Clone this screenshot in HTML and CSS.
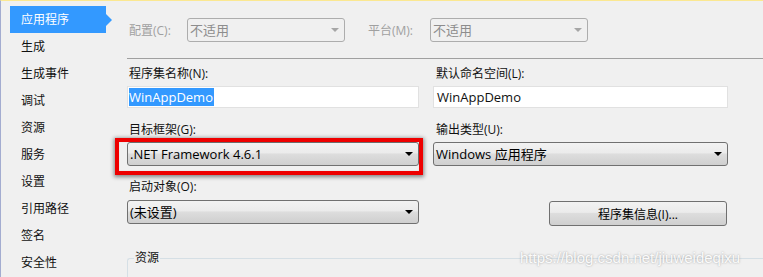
FILE: index.html
```html
<!DOCTYPE html>
<html lang="zh-CN">
<head>
<meta charset="utf-8">
<title>项目属性</title>
<link rel="stylesheet" href="styles.css">
</head>
<body>
<div class="window">
  <nav class="sidebar">
    <div class="nav-item active">应用程序</div>
    <div class="nav-item">生成</div>
    <div class="nav-item">生成事件</div>
    <div class="nav-item">调试</div>
    <div class="nav-item">资源</div>
    <div class="nav-item">服务</div>
    <div class="nav-item">设置</div>
    <div class="nav-item">引用路径</div>
    <div class="nav-item">签名</div>
    <div class="nav-item">安全性</div>
  </nav>
  <main class="content">
    <div class="toprow">
      <span class="top-label cfg">配置(C):</span>
      <div class="combo disabled w158"><span class="combo-text">不适用</span><span class="arrow"></span></div>
      <span class="top-label plat">平台(M):</span>
      <div class="combo disabled w158"><span class="combo-text">不适用</span><span class="arrow"></span></div>
    </div>
    <div class="sep"></div>
    <div class="grid">
      <div class="field left r1">
        <div class="lbl">程序集名称(N):</div>
        <div class="textbox"><span class="sel">WinAppDemo</span></div>
      </div>
      <div class="field right r1">
        <div class="lbl">默认命名空间(L):</div>
        <div class="textbox"><span class="plain">WinAppDemo</span></div>
      </div>
      <div class="field left r2">
        <div class="lbl">目标框架(G):</div>
        <div class="combo-wrap">
          <div class="combo"><span class="combo-text">.NET Framework 4.6.1</span><span class="arrow"></span></div>
          <div class="highlight"></div>
        </div>
      </div>
      <div class="field right r2">
        <div class="lbl">输出类型(U):</div>
        <div class="combo"><span class="combo-text">Windows 应用程序</span><span class="arrow"></span></div>
      </div>
      <div class="field left r3">
        <div class="lbl">启动对象(O):</div>
        <div class="combo"><span class="combo-text">(未设置)</span><span class="arrow"></span></div>
      </div>
      <div class="field right r3">
        <button class="btn">程序集信息(I)...</button>
      </div>
    </div>
    <fieldset class="group">
      <legend>资源</legend>
    </fieldset>
  </main>
  <div class="watermark">https://blog.csdn.net/jiuweideqixu</div>
</div>
</body>
</html>
```

FILE: styles.css
```css
html, body {
  margin: 0;
  padding: 0;
  background: #f0f0f0;
}

.window {
  position: relative;
  width: 762px;
  height: 276px;
  border-top: 1px solid #fbe891;
  border-left: 1px solid #a3acd0;
  background: #f0f0f0;
  overflow: hidden;
  display: flex;
  font-family: "Open Sans", "Noto Sans CJK SC", sans-serif;
  font-size: 12px;
  color: #111;
}

/* sidebar */
.sidebar {
  width: 126px;
  flex: none;
  padding-top: 5px;
  display: flex;
  flex-direction: column;
}

.nav-item {
  height: 27px;
  line-height: 27px;
  padding-left: 20px;
  white-space: nowrap;
}

.nav-item.active {
  position: relative;
  margin-left: 9px;
  width: 96px;
  padding-left: 11px;
  box-sizing: border-box;
  background: #3399ff;
  color: #fff;
}

.nav-item.active::after {
  content: "";
  position: absolute;
  right: -6px;
  top: 8px;
  border-left: 6px solid #3399ff;
  border-top: 6px solid transparent;
  border-bottom: 6px solid transparent;
}

/* content */
.content {
  flex: 1;
  display: flex;
  flex-direction: column;
  min-width: 0;
}

.toprow {
  display: flex;
  align-items: center;
  margin-top: 17px;
  height: 24px;
}

.top-label {
  color: #a0a0a0;
  white-space: nowrap;
}

.top-label.cfg {
  width: 60px;
  padding-left: 2px;
  box-sizing: border-box;
}

.top-label.plat {
  margin-left: 23px;
  width: 62px;
}

.sep {
  margin-top: 16px;
  border-top: 1px solid #a0a0a0;
}

.grid {
  display: grid;
  grid-template-columns: 292px 295px;
  grid-template-rows: 42px 44px 46px;
  column-gap: 14px;
  row-gap: 14px;
  margin-top: 7px;
}

.field {
  display: flex;
  flex-direction: column;
  align-items: stretch;
}

.lbl {
  height: 16px;
  line-height: 16px;
  margin-bottom: 4px;
  white-space: nowrap;
}

.field.left .lbl { padding-left: 2px; }
.field.right .lbl { padding-left: 3px; }
.field.r3 .lbl { margin-top: -1px; margin-bottom: 5px; }

.textbox {
  height: 22px;
  box-sizing: border-box;
  border: 1px solid #e1e1e1;
  background: #fff;
  padding: 1px;
  font-size: 13px;
  display: flex;
  align-items: center;
}

.textbox .sel {
  background: #3399ff;
  color: #fff;
  height: 18px;
  line-height: 18px;
  padding-right: 1px;
}

.textbox .plain {
  line-height: 18px;
  padding-left: 2px;
}

/* combos */
.combo {
  position: relative;
  height: 24px;
  box-sizing: border-box;
  border: 1px solid #707070;
  border-radius: 3px;
  background: linear-gradient(#f2f2f2 0%, #ebebeb 45%, #dddddd 50%, #cfcfcf 100%);
  font-size: 13px;
  display: flex;
  align-items: center;
  padding-left: 2px;
  color: #000;
}

.combo-text {
  flex: 1;
  white-space: nowrap;
  line-height: 20px;
}

.arrow {
  width: 0;
  height: 0;
  margin-right: 5px;
  border-top: 4px solid #000;
  border-left: 4px solid transparent;
  border-right: 4px solid transparent;
}

.combo.disabled {
  background: #f0f0f0;
  border-color: #adadad;
  color: #8d8d8d;
}

.combo.disabled .arrow {
  border-top-color: #a6a6a6;
}

.w158 { width: 158px; flex: none; }

.combo-wrap {
  position: relative;
}

.highlight {
  position: absolute;
  left: -12px;
  top: -4px;
  width: 308px;
  height: 37px;
  box-sizing: border-box;
  border: 4px solid #ee0000;
  box-shadow: 0 1px 4px 1px rgba(0, 0, 0, 0.45), inset 0 0 1px rgba(0, 0, 0, 0.2);
  pointer-events: none;
}

/* button */
.btn {
  margin-top: 21px;
  margin-left: 116px;
  width: 178px;
  height: 27px;
  border: 1px solid #707070;
  border-radius: 3px;
  background: linear-gradient(#f2f2f2 0%, #ebebeb 45%, #dddddd 50%, #cfcfcf 100%);
  font-family: "Open Sans", "Noto Sans CJK SC", sans-serif;
  font-size: 12px;
  color: #000;
  padding: 0;
}

/* group box */
.group {
  margin: 24px 0 0 0;
  padding: 0 6px;
  border: 1px solid #d5dfe5;
  border-right: none;
  border-bottom: none;
  border-radius: 3px 0 0 0;
  height: 40px;
  min-width: 0;
}

.group legend {
  padding: 0 1px;
  line-height: 16px;
  font-size: 12px;
}

/* watermark overlay */
.watermark {
  position: absolute;
  left: 519px;
  top: 248px;
  font-family: "Liberation Sans", Arial, sans-serif;
  font-size: 15px;
  line-height: 18px;
  color: rgba(255, 255, 255, 0.95);
  text-shadow: 0 0 2px rgba(90, 90, 90, 0.55);
  white-space: nowrap;
}
```
